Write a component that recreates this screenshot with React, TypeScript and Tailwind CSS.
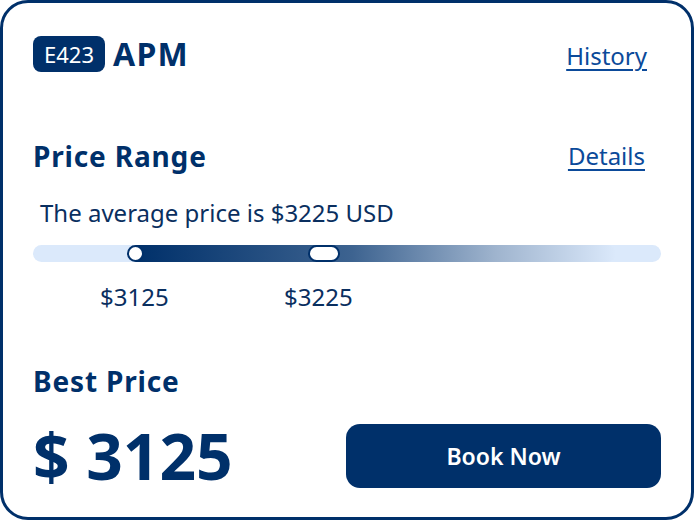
export default function App() {
  const navy = '#00306a';
  return (
    <div
      className="h-[520px] w-[694px] bg-white"
      style={{ fontFamily: '"Noto Sans", "Open Sans", sans-serif' }}
    >
      <div className="flex h-full w-full flex-col rounded-[28px] border-[3px] border-[#00306a] bg-white px-[30px] pt-[33px] text-[#00306a]">
        {/* header */}
        <div className="flex items-center justify-between">
          <div className="flex items-center gap-2">
            <span className="flex h-[36px] w-[72px] items-center justify-center rounded-[8px] bg-[#00306a] text-[22px] leading-none text-white">
              E423
            </span>
            <span className="text-[32px] font-bold leading-none tracking-[0.04em]">APM</span>
          </div>
          <a
            href="#"
            className="mr-[14px] mt-[8px] self-start text-[24px] leading-none text-[#0b4a9a] underline underline-offset-4"
          >
            History
          </a>
        </div>

        {/* price range */}
        <div className="mt-[70px] flex h-[28px] items-center justify-between">
          <h2 className="text-[28px] font-bold leading-none tracking-[0.03em]">Price Range</h2>
          <a href="#" className="mr-[16px] text-[24px] leading-none text-[#0b4a9a] underline underline-offset-4">
            Details
          </a>
        </div>
        <p className="mt-[31px] pl-[7px] text-[24px] leading-none text-[#0a2f5f]">
          The average price is $3225 USD
        </p>

        <div className="relative mt-[20px] h-[17px] w-full rounded-full bg-[#dbe9fb]">
          <div
            className="absolute top-0 h-full rounded-r-full"
            style={{
              left: 103,
              width: 480,
              background: `linear-gradient(to right, ${navy} 0%, #3d6390 45%, #9fb4ce 75%, #dbe9fb 100%)`,
            }}
          />
          <span className="absolute left-[94px] top-0 h-[17px] w-[17px] rounded-full border-[2px] border-[#00306a] bg-white" />
          <span className="absolute left-[275px] top-0 h-[17px] w-[32px] rounded-full border-[2px] border-[#00306a] bg-white" />
        </div>

        <div className="relative mt-[23px] h-[24px] text-[24px] leading-none text-[#0a2f5f]">
          <span className="absolute left-[67px]">$3125</span>
          <span className="absolute left-[251px]">$3225</span>
        </div>

        {/* best price */}
        <h2 className="mt-[58px] text-[28px] font-bold leading-none tracking-[0.03em]">Best Price</h2>
        <div className="mt-[29px] flex h-[64px] items-center justify-between">
          <span className="text-[64px] font-bold leading-none">$ 3125</span>
          <button className="flex h-[64px] w-[315px] items-center justify-center rounded-[14px] bg-[#00306a] text-[23px] font-semibold text-white">
            Book Now
          </button>
        </div>
      </div>
    </div>
  );
}
